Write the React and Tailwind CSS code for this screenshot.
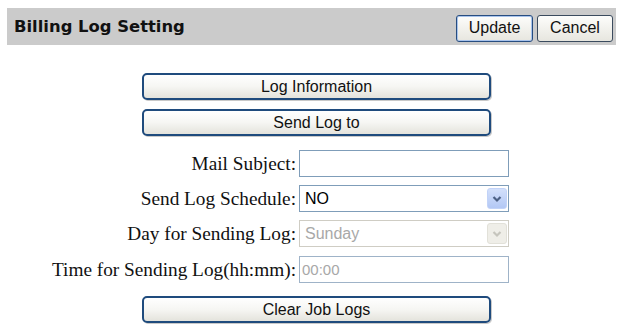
import React from "react";

const serif = { fontFamily: '"Liberation Serif", "Times New Roman", serif' };
const sans = { fontFamily: '"Liberation Sans", Arial, sans-serif' };

function BigButton({ children, className = "" }) {
  return (
    <div
      className={`ml-[142px] w-[349px] h-[27px] rounded-[5px] border-2 border-[#1f4b7d] bg-gradient-to-b from-[#ffffff] via-[#f6f6f3] to-[#e4e3dc] flex items-center justify-center text-[16px] text-[#111] leading-none shadow-[1px_1px_0_#c9c9c9] ${className}`}
      style={sans}
    >
      {children}
    </div>
  );
}

function Arrow({ disabled }) {
  return (
    <div
      className={`w-[20px] h-[21px] rounded-[3px] flex items-center justify-center ${
        disabled
          ? "bg-[#efeee8] border border-[#e2e1d9]"
          : "bg-gradient-to-b from-[#d3e0fb] to-[#b3c8f5] border border-[#c2d3f8]"
      }`}
    >
      <svg width="10" height="8" viewBox="0 0 10 8">
        <path
          d="M1.5 2 L5 5.5 L8.5 2"
          fill="none"
          stroke={disabled ? "#c6c5bd" : "#4d6185"}
          strokeWidth="2.2"
        />
      </svg>
    </div>
  );
}

function Row({ label, children, className = "" }) {
  return (
    <div className={`flex items-center h-[27px] ${className}`}>
      <div
        className="w-[299px] pr-[3px] text-right text-[19.3px] leading-none text-[#111] whitespace-nowrap"
        style={serif}
      >
        {label}
      </div>
      {children}
    </div>
  );
}

export default function App() {
  return (
    <div className="w-[626px] h-[331px] bg-white pt-[8px] overflow-hidden">
      <div className="ml-[7px] w-[609px] h-[37px] bg-[#cbcbcb] flex items-center justify-between pl-[7px] pr-[3px]">
        <div
          className="text-[16.4px] font-bold text-[#111] leading-none pt-[1px]"
          style={{ fontFamily: '"DejaVu Sans", Verdana, sans-serif' }}
        >
          Billing Log Setting
        </div>
        <div className="flex gap-[4px] mt-[3px]">
          <div
            className="w-[77px] h-[27px] rounded-[3px] border border-[#274d80] bg-gradient-to-b from-[#fdfdfb] to-[#e7e6df] shadow-[inset_0_0_0_1px_#a9c4ec] flex items-center justify-center text-[16px] text-[#111] leading-none"
            style={sans}
          >
            Update
          </div>
          <div
            className="w-[76px] h-[27px] rounded-[3px] border border-[#3b4b5e] bg-gradient-to-b from-[#fdfdfb] to-[#e7e6df] flex items-center justify-center text-[16px] text-[#111] leading-none"
            style={sans}
          >
            Cancel
          </div>
        </div>
      </div>

      <div className="flex flex-col">
        <BigButton className="mt-[28px]">Log Information</BigButton>
        <BigButton className="mt-[9px]">Send Log to</BigButton>

        <Row label="Mail Subject:" className="mt-[14px]">
          <div className="w-[210px] h-[27px] border border-[#7f9db9] bg-white" />
        </Row>

        <Row label="Send Log Schedule:" className="mt-[8px]">
          <div className="w-[210px] h-[27px] border border-[#7f9db9] bg-white flex items-center justify-between pl-[5px] pr-[1px]">
            <span className="text-[16px] text-black leading-none" style={sans}>
              NO
            </span>
            <Arrow />
          </div>
        </Row>

        <Row label="Day for Sending Log:" className="mt-[8px]">
          <div className="w-[210px] h-[27px] border border-[#cfcdc4] bg-white flex items-center justify-between pl-[5px] pr-[1px]">
            <span className="text-[16px] text-[#a8a8a8] leading-none" style={sans}>
              Sunday
            </span>
            <Arrow disabled />
          </div>
        </Row>

        <Row label="Time for Sending Log(hh:mm):" className="mt-[9px]">
          <div className="w-[210px] h-[27px] border border-[#9fb3c8] bg-white flex items-center pl-[2px]">
            <span className="text-[15px] text-[#a8a8a8] leading-none" style={sans}>
              00:00
            </span>
          </div>
        </Row>

        <BigButton className="mt-[13px]">Clear Job Logs</BigButton>
      </div>
    </div>
  );
}
